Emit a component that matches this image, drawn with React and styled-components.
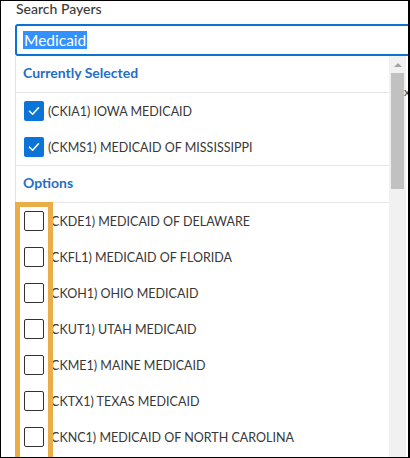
import styled, { createGlobalStyle } from "styled-components";

const GlobalStyle = createGlobalStyle`
  html, body {
    margin: 0;
    padding: 0;
    background: #ffffff;
  }
  body {
    font-family: Lato, "Noto Sans", sans-serif;
  }
`;

const Frame = styled.div`
  position: relative;
  box-sizing: border-box;
  width: 410px;
  height: 458px;
  overflow: hidden;
  border-top: 1px solid #000;
  border-left: 1px solid #000;
  border-right: 2px solid #000;
  border-bottom: 1px solid #000;
  padding-left: 14px;
  background: #fff;
`;

const Label = styled.div`
  height: 23px;
  padding-left: 1px;
  font-size: 14px;
  line-height: 15px;
  font-weight: 500;
  color: #3a3a3a;
`;

const SearchBox = styled.div`
  box-sizing: border-box;
  height: 32px;
  margin-right: -12px;
  border: 2px solid #0a72d1;
  border-radius: 3px;
  display: flex;
  align-items: center;
  padding-left: 6px;
`;

const Selected = styled.span`
  background: #3390ff;
  color: #fff;
  font-size: 15.5px;
  line-height: 18px;
  padding: 0 1px;
`;

const Panel = styled.div`
  display: flex;
  height: 420px;
  margin-right: 2px;
  border-left: 1px solid #e2e2e2;
`;

const List = styled.div`
  flex: 1;
`;

const SectionHead = styled.div`
  box-sizing: border-box;
  height: 37px;
  display: flex;
  align-items: center;
  padding: 0 0 3px 7px;
  font-size: 14px;
  font-weight: 700;
  color: #1f6fc6;
  border-bottom: 1px solid #e6e6e6;
`;

const Group = styled.div`
  border-bottom: ${(p) => (p.$divided ? "1px solid #e6e6e6" : "none")};
`;

const Row = styled.div`
  height: 36px;
  display: flex;
  align-items: center;
  padding-left: 8px;
  gap: 4px;
  font-size: 12.5px;
  color: #383838;
  white-space: nowrap;
`;

const Box = styled.span`
  box-sizing: border-box;
  width: 20px;
  height: 20px;
  flex: none;
  border-radius: 2px;
  display: flex;
  align-items: center;
  justify-content: center;
  background: ${(p) => (p.$checked ? "#0b74d6" : "#fff")};
  border: ${(p) => (p.$checked ? "none" : "1.5px solid #333")};
`;

const Scrollbar = styled.div`
  width: 17px;
  flex: none;
  background: #f1f1f1;
  display: flex;
  flex-direction: column;
  align-items: center;
`;

const Arrow = styled.div`
  margin-top: 7px;
  width: 0;
  height: 0;
  border-left: 4px solid transparent;
  border-right: 4px solid transparent;
  border-bottom: 4px solid #a3a3a3;
`;

const Thumb = styled.div`
  margin-top: 6px;
  width: 13px;
  height: 116px;
  background: #c1c1c1;
`;

const Highlight = styled.div`
  position: absolute;
  left: 14px;
  top: 201px;
  width: 38px;
  height: 270px;
  box-sizing: border-box;
  border: 5px solid #ebad48;
  pointer-events: none;
`;

const Peek = styled.span`
  position: absolute;
  left: 403px;
  top: 83px;
  font-size: 12px;
  color: #3a3a3a;
`;

function Check() {
  return (
    <svg width="12" height="10" viewBox="0 0 12 10">
      <path
        d="M1.5 5.2 L4.6 8.2 L10.5 1.8"
        fill="none"
        stroke="#fff"
        strokeWidth="1.6"
        strokeLinecap="round"
        strokeLinejoin="round"
      />
    </svg>
  );
}

const current = ["(CKIA1) IOWA MEDICAID", "(CKMS1) MEDICAID OF MISSISSIPPI"];
const options = [
  "(CKDE1) MEDICAID OF DELAWARE",
  "(CKFL1) MEDICAID OF FLORIDA",
  "(CKOH1) OHIO MEDICAID",
  "(CKUT1) UTAH MEDICAID",
  "(CKME1) MAINE MEDICAID",
  "(CKTX1) TEXAS MEDICAID",
  "(CKNC1) MEDICAID OF NORTH CAROLINA",
];

export default function App() {
  return (
    <>
      <GlobalStyle />
      <Frame>
        <Label>Search Payers</Label>
        <SearchBox>
          <Selected>Medicaid</Selected>
        </SearchBox>
        <Panel>
          <List>
            <SectionHead>Currently Selected</SectionHead>
            <Group $divided>
              {current.map((v) => (
                <Row key={v}>
                  <Box $checked>
                    <Check />
                  </Box>
                  {v}
                </Row>
              ))}
            </Group>
            <SectionHead>Options</SectionHead>
            <Group>
              {options.map((v) => (
                <Row key={v}>
                  <Box />
                  {v}
                </Row>
              ))}
            </Group>
          </List>
          <Scrollbar>
            <Arrow />
            <Thumb />
          </Scrollbar>
        </Panel>
        <Peek>x</Peek>
        <Highlight />
      </Frame>
    </>
  );
}
